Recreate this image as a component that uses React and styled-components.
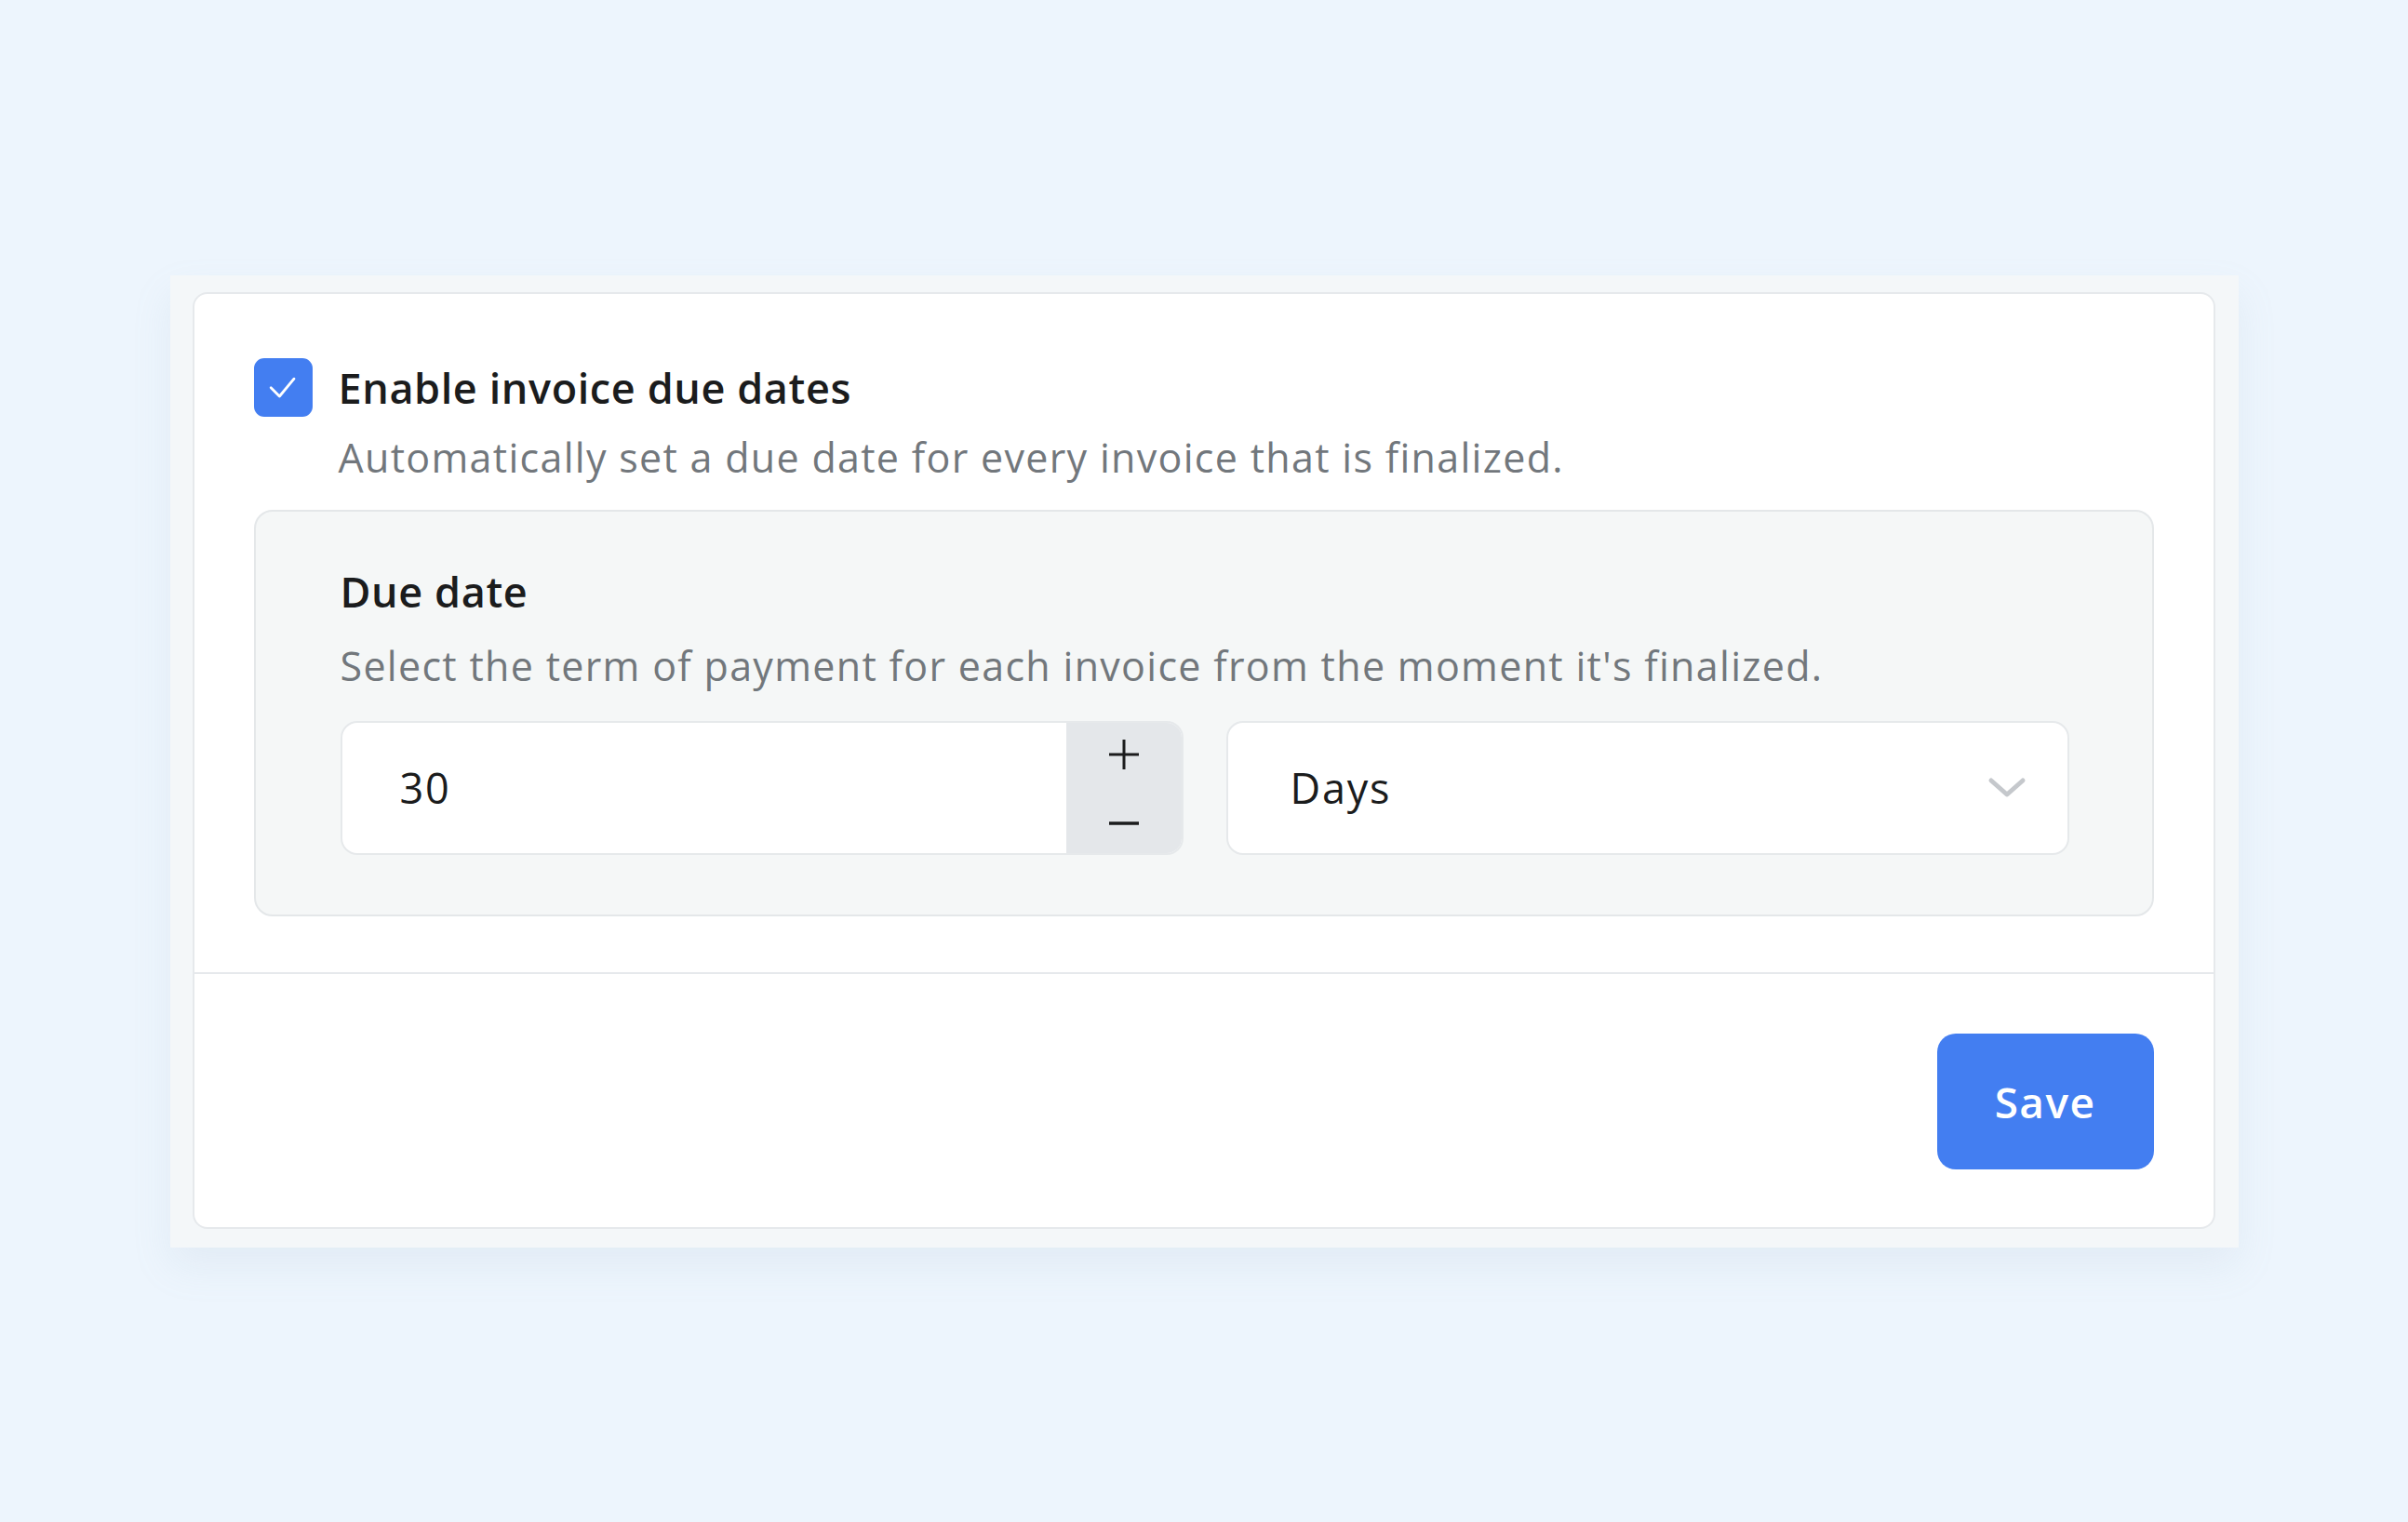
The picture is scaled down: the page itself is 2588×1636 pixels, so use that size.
import React, { useState } from "react";
import styled, { createGlobalStyle } from "styled-components";

const GlobalStyle = createGlobalStyle`
  * { box-sizing: border-box; }
  html, body {
    margin: 0;
    padding: 0;
    background: #edf5fd;
    font-family: "Open Sans", "Lato", sans-serif;
  }
`;

const Page = styled.main`
  min-height: 100vh;
  display: flex;
  align-items: center;
  justify-content: center;
`;

const Frame = styled.div`
  width: 2223px;
  padding: 18px 25px 20px 24px;
  background: #f4f7f9;
  box-shadow: 0 20px 40px rgba(150, 170, 190, 0.12);
`;

const Card = styled.section`
  background: #fff;
  border: 2px solid #e6e9ec;
  border-radius: 16px;
  overflow: hidden;
`;

const Body = styled.div`
  padding: 69px 64px 60px;
  border-bottom: 2px solid #e6e9ec;
`;

const CheckRow = styled.label`
  display: flex;
  align-items: center;
  gap: 28px;
  cursor: pointer;
`;

const Box = styled.span`
  width: 63px;
  height: 63px;
  border-radius: 11px;
  background: ${(p) => (p.checked ? "#437ef1" : "#fff")};
  border: 2px solid ${(p) => (p.checked ? "#437ef1" : "#c9cdd2")};
  display: flex;
  align-items: center;
  justify-content: center;
  flex: none;
  svg {
    width: 48px;
    height: 48px;
  }
`;

const Title = styled.h2`
  margin: 0;
  font-size: 45px;
  line-height: 53px;
  font-weight: 600;
  letter-spacing: 0.6px;
  color: #1b1c1d;
`;

const Description = styled.p`
  margin: ${(p) => p.margin || "16px 0 0 91px"};
  font-size: 43px;
  line-height: 56px;
  font-weight: 400;
  letter-spacing: 1.3px;
  color: #72777c;
`;

const Panel = styled.div`
  margin-top: 28px;
  background: #f5f7f7;
  border: 2px solid #e4e7e9;
  border-radius: 20px;
  padding: 59px 89px 64px 91px;
`;

const Fields = styled.div`
  margin-top: 31px;
  display: grid;
  grid-template-columns: 1fr 1fr;
  gap: 46px;
`;

const Field = styled.div`
  height: 144px;
  background: #fff;
  border: 2px solid #e6e9eb;
  border-radius: 18px;
  display: flex;
  align-items: center;
  overflow: hidden;
  font-size: 45px;
  letter-spacing: 1.8px;
  color: #1b1c1d;
`;

const Value = styled.span`
  flex: 1;
  padding-left: ${(p) => p.pad}px;
`;

const Stepper = styled.div`
  width: 124px;
  align-self: stretch;
  background: #e4e7ea;
  display: flex;
  flex-direction: column;
  align-items: center;
  justify-content: space-between;
  padding: 9px 0 7px;
  button {
    border: 0;
    background: transparent;
    padding: 0;
    width: 50px;
    height: 50px;
    display: flex;
    align-items: center;
    justify-content: center;
    cursor: pointer;
  }
  svg {
    width: 36px;
    height: 36px;
  }
`;

const Chevron = styled.svg`
  width: 42px;
  height: 24px;
  margin-right: 44px;
`;

const Footer = styled.div`
  padding: 64px 64px 62px;
  display: flex;
  justify-content: flex-end;
`;

const SaveButton = styled.button`
  width: 233px;
  height: 146px;
  border: 0;
  border-radius: 20px;
  background: #437ef1;
  color: #fff;
  font-family: inherit;
  font-size: 46px;
  font-weight: 600;
  letter-spacing: 1.4px;
  cursor: pointer;
`;

function Check() {
  return (
    <svg viewBox="0 0 24 24" fill="none" stroke="#fff" strokeWidth="1.4" strokeLinecap="round" strokeLinejoin="round">
      <path d="M5.6 12.4 L10.2 17 L18 7.6" />
    </svg>
  );
}

export default function App() {
  const [enabled, setEnabled] = useState(true);
  const [days, setDays] = useState(30);

  return (
    <>
      <GlobalStyle />
      <Page>
        <Frame>
          <Card>
            <Body>
              <CheckRow onClick={() => setEnabled(!enabled)}>
                <Box checked={enabled}>{enabled && <Check />}</Box>
                <Title>Enable invoice due dates</Title>
              </CheckRow>
              <Description>
                Automatically set a due date for every invoice that is finalized.
              </Description>
              <Panel>
                <Title>Due date</Title>
                <Description margin="26px 0 0">
                  Select the term of payment for each invoice from the moment it's finalized.
                </Description>
                <Fields>
                  <Field>
                    <Value pad={62}>{days}</Value>
                    <Stepper>
                      <button onClick={() => setDays(days + 1)} aria-label="increase">
                        <svg viewBox="0 0 36 36" stroke="#1b1c1d" strokeWidth="3">
                          <path d="M18 2v32M2 18h32" />
                        </svg>
                      </button>
                      <button onClick={() => setDays(Math.max(0, days - 1))} aria-label="decrease">
                        <svg viewBox="0 0 36 36" stroke="#1b1c1d" strokeWidth="3.5">
                          <path d="M2 18h32" />
                        </svg>
                      </button>
                    </Stepper>
                  </Field>
                  <Field>
                    <Value pad={67}>Days</Value>
                    <Chevron viewBox="0 0 42 24" fill="none" stroke="#c5c8cc" strokeWidth="5" strokeLinecap="round" strokeLinejoin="round">
                      <path d="M4 4 L21 19 L38 4" />
                    </Chevron>
                  </Field>
                </Fields>
              </Panel>
            </Body>
            <Footer>
              <SaveButton>Save</SaveButton>
            </Footer>
          </Card>
        </Frame>
      </Page>
    </>
  );
}
